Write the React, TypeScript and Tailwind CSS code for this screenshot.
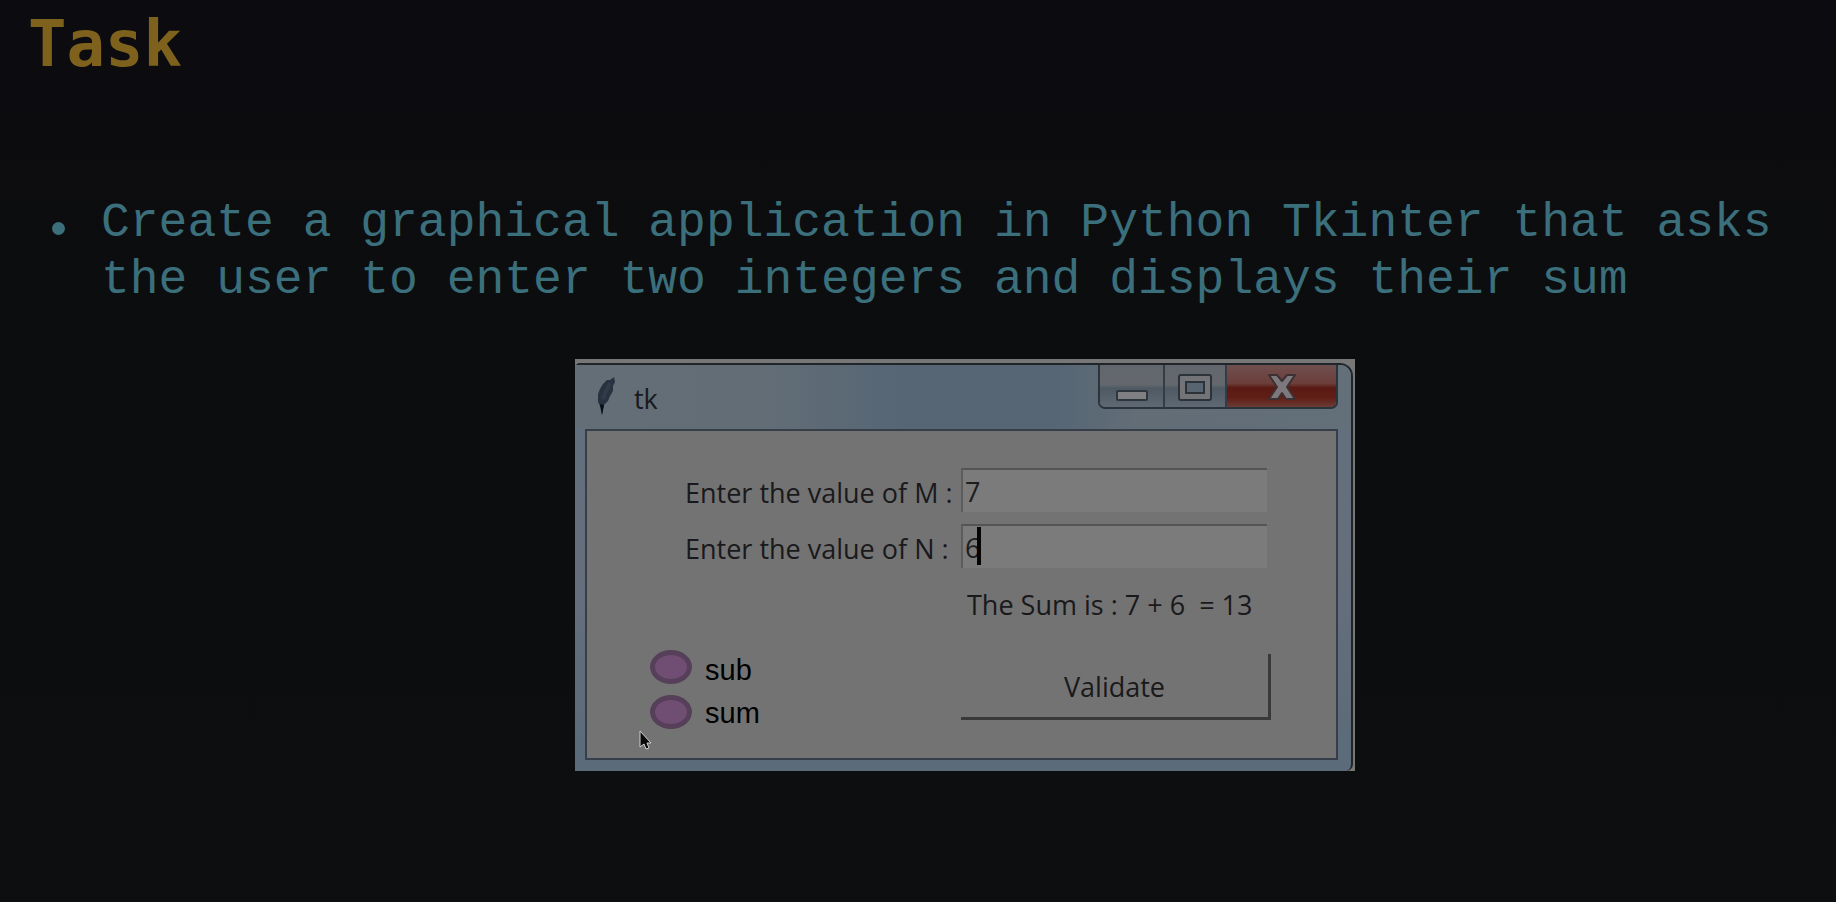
import { useState } from "react";

const entryClass =
  "h-11 w-[306px] border-t-2 border-l-2 border-t-[#555555] border-l-[#5c5c5c] bg-[#7b7b7b] pl-[2px] text-[27px] leading-[38px] text-[#1d1d1f] caret-transparent outline-none";
const radioClass =
  "h-[34px] w-[42px] shrink-0 appearance-none rounded-[50%] border-[5px] border-[#563f59] bg-[#704d72]";

function Feather() {
  return (
    <svg viewBox="0 0 18 38" className="h-[38px] w-[18px]" aria-hidden="true">
      <path
        d="M17 0 L18 5 L16 9 L16 14 L13 19 L11 24 L7 28 L5 38 L3 29 L1 25 L1 17 L3 12 L6 7 L10 3 L13 3 Z"
        fill="#28313f"
      />
      <path d="M13 6 L9 14 L6 22" fill="none" stroke="#303a49" strokeWidth="4" />
      <path d="M3 27 L5 38 L7 28 Z" fill="#080d17" />
    </svg>
  );
}

function WindowControls() {
  return (
    <div className="flex h-[44px] w-[240px] overflow-hidden rounded-b-[7px] border-x-2 border-b-2 border-[#2b333c]">
      <button
        aria-label="Minimize"
        className="flex w-[65px] justify-center border-r-2 border-[#343c45] bg-[linear-gradient(#62676d_0%,#64686d_46%,#4e5964_56%,#5e6974_100%)] pt-[25px]"
      >
        <svg viewBox="0 0 32 11" className="h-[11px] w-8" aria-hidden="true">
          <rect x="1" y="1" width="30" height="9" rx="1" fill="#807f84" stroke="#2f353d" strokeWidth="2" />
        </svg>
      </button>
      <button
        aria-label="Maximize"
        className="flex w-[62px] justify-center border-r-2 border-[#343c45] bg-[linear-gradient(#62676d_0%,#64686d_46%,#4e5964_56%,#5e6974_100%)] pt-[9px]"
      >
        <svg viewBox="0 0 34 27" className="h-[27px] w-[34px]" aria-hidden="true">
          <rect x="1" y="1" width="32" height="25" rx="2" fill="#727477" stroke="#2b323a" strokeWidth="2" />
          <rect x="8" y="8" width="18" height="11" fill="#586470" stroke="#2b323a" strokeWidth="2" />
        </svg>
      </button>
      <button
        aria-label="Close"
        className="flex flex-1 justify-center bg-[linear-gradient(#6e504f_0%,#6c3e3a_44%,#591a14_54%,#611e16_78%,#6a3c35_100%)] pt-[9px]"
      >
        <svg viewBox="0 0 30 26" className="h-[26px] w-[30px]" aria-hidden="true">
          <path
            d="M2 1 H10 L15 7 L20 1 H28 L20 13 L28 25 H19 L15 19 L11 25 H2 L10 13 Z"
            fill="#7c787b"
            stroke="#3c3032"
            strokeWidth="2"
            strokeLinejoin="round"
          />
        </svg>
      </button>
    </div>
  );
}

function TkWindow() {
  const [m, setM] = useState("7");
  const [n, setN] = useState("6");
  return (
    <section
      aria-label="tk"
      className="relative w-[780px] bg-[#777777] pt-1 pr-[2px] font-['Open_Sans','Noto_Sans',sans-serif] text-[27px] text-[#19191c]"
    >
      <div className="rounded-tl-[5px] rounded-tr-[13px] rounded-br-[7px] border-t-2 border-r-2 border-[#20252a] bg-[linear-gradient(#62707d,#666e7c_50%,#5b6b79_98%)] pr-[13px] pb-[11px] pl-[10px]">
        <header className="-mr-[13px] -ml-[10px] flex h-16 items-start rounded-tr-[11px] bg-[linear-gradient(90deg,#636e77_0%,#626d76_25%,#566675_42%,#566675_62%,#626d76_72%,#636f79_100%)] pr-[13px] pl-[22px]">
          <div className="mt-3">
            <Feather />
          </div>
          <h2 className="mt-4 ml-[19px] leading-9">tk</h2>
          <div className="ml-auto">
            <WindowControls />
          </div>
        </header>
        <form
          onSubmit={(e) => e.preventDefault()}
          className="flex h-[331px] flex-col border-2 border-[#353e49] bg-[#737373] pt-[37px] pl-[98px]"
        >
          <div className="grid grid-cols-[276px_310px] gap-y-[6px]">
            <label htmlFor="m" className="leading-[50px] whitespace-nowrap">
              Enter the value of M :
            </label>
            <input id="m" value={m} onChange={(e) => setM(e.target.value)} className={entryClass} />
            <label htmlFor="n" className="leading-[50px] whitespace-nowrap">
              Enter the value of N :
            </label>
            <div className="relative">
              <input id="n" value={n} onChange={(e) => setN(e.target.value)} className={entryClass} />
              <span className="absolute top-[3px] left-4 h-[38px] w-1 bg-[#050505]" />
            </div>
            <output className="col-start-2 pl-[6px] leading-[50px] whitespace-pre">
              {"The Sum is : 7 + 6  = 13"}
            </output>
          </div>
          <div className="-ml-[35px] flex pt-5">
            <fieldset className="flex w-[311px] flex-col gap-[11px] font-['Liberation_Sans',Arial,sans-serif] text-[29px] leading-[34px] text-black">
              <label className="flex h-[34px] gap-[13px]">
                <input type="radio" name="operation" className={radioClass} />
                <span className="pt-[3px]">sub</span>
              </label>
              <label className="flex h-[34px] gap-[13px]">
                <input type="radio" name="operation" className={radioClass} />
                <span className="pt-px">sum</span>
              </label>
            </fieldset>
            <button className="mt-1 h-[66px] w-[310px] border-r-[3px] border-b-[3px] border-[#393939] pt-1">
              Validate
            </button>
          </div>
        </form>
      </div>
      <svg viewBox="0 0 14 20" className="absolute top-[371px] left-16 h-5 w-[14px]" aria-hidden="true">
        <path
          d="M1 1 V17 L5 14 L7 19 L10 18 L8 13 H12 Z"
          fill="#090909"
          stroke="#cfcfcf"
          strokeWidth="1"
        />
      </svg>
    </section>
  );
}

export default function App() {
  return (
    <main className="min-h-screen bg-[linear-gradient(#0c0b0f_0%,#0c0d0f_30%,#0c0e0f_100%)] pb-10">
      <h1 className="pt-2 pl-7 font-['DejaVu_Sans_Mono',monospace] text-[64px] leading-[72px] font-bold text-[#7d611d]">
        Task
      </h1>
      <ul className="pt-[115px] pr-10 pl-[52px] font-['Liberation_Mono',monospace] text-5xl leading-[57px] text-[#3b6f7c]">
        <li className="flex gap-9">
          <span className="mt-[27px] size-[13px] shrink-0 rounded-full bg-[#3b6f7c]" />
          <p className="max-w-[1700px]">
            Create a graphical application in Python Tkinter that asks the user to enter two integers and displays
            their sum
          </p>
        </li>
      </ul>
      <div className="pt-[50px] pl-[575px]">
        <TkWindow />
      </div>
    </main>
  );
}
